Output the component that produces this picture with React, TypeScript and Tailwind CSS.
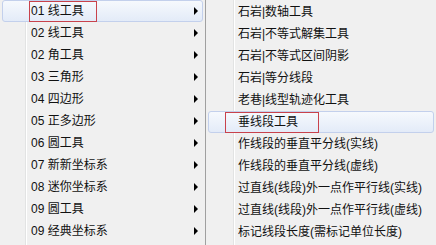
import React from 'react';

const leftItems = [
    '01 线工具',
    '02 线工具',
    '02 角工具',
    '03 三角形',
    '04 四边形',
    '05 正多边形',
    '06 圆工具',
    '07 新新坐标系',
    '08 迷你坐标系',
    '09 圆工具',
    '09 经典坐标系',
];

const rightItems = [
    '石岩|数轴工具',
    '石岩|不等式解集工具',
    '石岩|不等式区间阴影',
    '石岩|等分线段',
    '老巷|线型轨迹化工具',
    '垂线段工具',
    '作线段的垂直平分线(实线)',
    '作线段的垂直平分线(虚线)',
    '过直线(线段)外一点作平行线(实线)',
    '过直线(线段)外一点作平行线(虚线)',
    '标记线段长度(需标记单位长度)',
];

const gutter =
    'bg-[linear-gradient(to_right,transparent_25px,#e2e3e3_25px,#e2e3e3_26px,#ffffff_26px,#ffffff_27px,transparent_27px)]';

export default function App() {
    return (
        <div
            className="w-[436px] h-[245px] overflow-hidden flex bg-[#f0f0f0] text-[12px] text-[#111]"
            style={{ fontFamily: '"Liberation Sans", "Noto Sans CJK SC", sans-serif' }}
        >
            {/* Main menu */}
            <div className={`w-[205px] shrink-0 flex flex-col ${gutter}`}>
                {leftItems.map((label, i) => (
                    <MenuRow key={i} label={label} active={i === 0} arrow textPad={31} boxPad={29} boxWidth={68} />
                ))}
            </div>

            {/* Submenu */}
            <div className="flex-1 border-l border-[#a0a0a0] pt-[1px] flex flex-col bg-[linear-gradient(to_right,transparent_27px,#e2e3e3_27px,#e2e3e3_28px,#ffffff_28px,#ffffff_29px,transparent_29px)]">
                {rightItems.map((label, i) => (
                    <MenuRow key={i} label={label} active={i === 5} textPad={32} boxPad={19} boxWidth={94} />
                ))}
            </div>
        </div>
    );
}

function MenuRow({
    label,
    active,
    arrow,
    textPad,
    boxPad,
    boxWidth,
}: {
    label: string;
    active?: boolean;
    arrow?: boolean;
    textPad: number;
    boxPad: number;
    boxWidth: number;
}) {
    if (active) {
        return (
            <div className="h-[22px] shrink-0 flex items-center mx-[2px] rounded-[3px] border border-[#c3d0ec] bg-gradient-to-b from-[#f6f9fd] to-[#e3ebf8]">
                <span
                    className="h-[21px] flex items-center border border-[#c8424c] whitespace-nowrap"
                    style={{ marginLeft: boxPad - 3, width: boxWidth, paddingLeft: textPad - boxPad - 1 }}
                >
                    {label}
                </span>
                {arrow && <span className="ml-auto mr-[4px] w-0 h-0 border-y-[4px] border-y-transparent border-l-[4px] border-l-black" />}
            </div>
        );
    }
    return (
        <div className="h-[22px] shrink-0 flex items-center" style={{ paddingLeft: textPad }}>
            <span className="whitespace-nowrap">{label}</span>
            {arrow && <span className="ml-auto mr-[7px] w-0 h-0 border-y-[4px] border-y-transparent border-l-[4px] border-l-black" />}
        </div>
    );
}
